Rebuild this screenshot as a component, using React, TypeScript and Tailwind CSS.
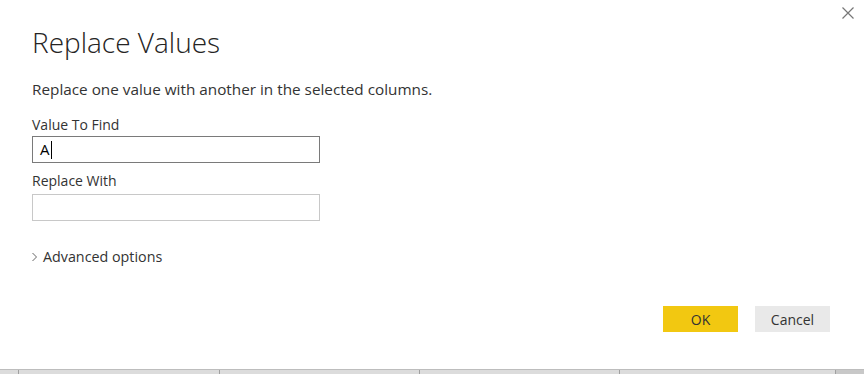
import React from "react";

export default function App() {
  const font = { fontFamily: '"Segoe UI", "Open Sans", "Noto Sans", sans-serif' };
  return (
    <div className="w-[864px] h-[374px] bg-white flex flex-col text-[#333333]" style={font}>
      <div className="relative flex-1 flex flex-col pl-[32px]">
        <button className="absolute right-[10px] top-[7px] w-[12px] h-[12px] text-[#777]">
          <svg viewBox="0 0 12 12" width="12" height="12">
            <path d="M0.5 0.5 L11.5 11.5 M11.5 0.5 L0.5 11.5" stroke="#777" strokeWidth="1.2" />
          </svg>
        </button>
        <h1 className="mt-[22px] text-[28px] font-light leading-[40px] text-[#252423]">Replace Values</h1>
        <p className="mt-[17px] text-[15.3px] leading-[20px] text-[#333]">Replace one value with another in the selected columns.</p>
        <label className="mt-[16px] text-[14px] leading-[20px]">Value To Find</label>
        <div className="mt-[1px] w-[288px] h-[27px] border border-[#7a7a7a] flex items-center pl-[7px] text-[15px] text-black">
          A<span className="inline-block w-px h-[18px] bg-black ml-px"></span>
        </div>
        <label className="mt-[8px] text-[14px] leading-[20px]">Replace With</label>
        <div className="mt-[3px] w-[288px] h-[27px] border border-[#c8c8c8]"></div>
        <div className="mt-[26px] flex items-center gap-[4px] text-[14.3px] leading-[20px]">
          <svg viewBox="0 0 6 10" width="6" height="10" className="mr-[1px]">
            <path d="M0.5 1 L4.5 5 L0.5 9" stroke="#666" strokeWidth="1" fill="none" />
          </svg>
          <span>Advanced options</span>
        </div>
        <div className="mt-auto mb-[37px] flex justify-end gap-[17px] pr-[34px]">
          <button className="w-[75px] h-[26px] bg-[#f2c811] text-[14px] text-[#333]">OK</button>
          <button className="w-[75px] h-[26px] bg-[#e9e9e9] text-[14px] text-[#333]">Cancel</button>
        </div>
      </div>
      <div className="h-[5px] border-t border-[#bdbdbd] bg-[#dcdcdc] flex">
        <div className="w-[19px] border-r border-[#a0a0a0]"></div>
        <div className="w-[201px] border-r border-[#a0a0a0]"></div>
        <div className="w-[200px] border-r border-[#a0a0a0]"></div>
        <div className="w-[200px] border-r border-[#a0a0a0]"></div>
        <div className="w-[216px] border-r border-[#a0a0a0]"></div>
        <div className="flex-1 bg-[#c8c8c8]"></div>
      </div>
    </div>
  );
}
